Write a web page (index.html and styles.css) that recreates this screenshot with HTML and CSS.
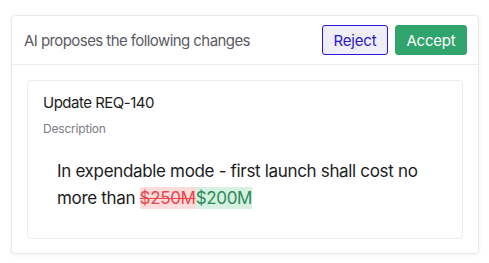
FILE: index.html
```html
<!DOCTYPE html>
<html>
<head>
<meta charset="utf-8">
<link rel="stylesheet" href="styles.css">
</head>
<body>
<div class="card">
  <div class="card-header">
    <span class="title">AI proposes the following changes</span>
    <div class="actions">
      <button class="btn btn-reject">Reject</button>
      <button class="btn btn-accept">Accept</button>
    </div>
  </div>
  <div class="card-body">
    <div class="change">
      <div class="change-title">Update REQ-140</div>
      <div class="change-label">Description</div>
      <p class="change-text">In expendable mode - first launch shall cost no more than <del class="removed">$250M</del><ins class="added">$200M</ins></p>
    </div>
  </div>
</div>
</body>
</html>
```
FILE: styles.css
```css
* { box-sizing: border-box; }
html, body { margin: 0; padding: 0; background: #ffffff; }
body {
  font-family: Inter, "Noto Sans", sans-serif;
  padding: 15px 10px 10px 11px;
}
.card {
  width: 468px;
  border: 1px solid #e9e9ec;
  border-radius: 4px;
  background: #fff;
  box-shadow: 0 1px 4px rgba(0,0,0,0.06);
}
.card-header {
  display: flex;
  align-items: center;
  justify-content: space-between;
  height: 49px;
  padding: 0 11px 0 12px;
  border-bottom: 1px solid #ececef;
}
.title {
  font-size: 15px;
  color: #5b5b63;
  letter-spacing: -0.57px;
}
.actions { display: flex; gap: 7px; }
.btn {
  font-family: inherit;
  font-size: 15px;
  height: 30px;
  border-radius: 3px;
  padding: 0;
  cursor: pointer;
  letter-spacing: -0.2px;
}
.btn-reject {
  width: 66px;
  background: #efeef6;
  color: #2a17c9;
  border: 1px solid #2a17d6;
}
.btn-accept {
  width: 72px;
  background: #2fa46c;
  color: #ffffff;
  border: 1px solid #2fa46c;
}
.card-body {
  padding: 15px 15px 14px 15px;
}
.change {
  border: 1px solid #ececef;
  border-radius: 4px;
  padding: 12px 15px 10px 15px;
  min-height: 159px;
}
.change-title {
  font-size: 15px;
  color: #1d1d20;
  line-height: 20px;
  letter-spacing: -0.5px;
}
.change-label {
  font-size: 12px;
  color: #7b7b84;
  margin-top: 8px;
  line-height: 16px;
  letter-spacing: -0.2px;
}
.change-text {
  margin: 21px 0 0 14px;
  font-size: 17px;
  line-height: 27px;
  color: #1b1b1e;
  letter-spacing: -0.33px;
}
.removed {
  background: #fddcdc;
  color: #e5484d;
  text-decoration: line-through;
  padding: 1px 0;
}
.added {
  background: #d7f1e0;
  color: #2b8a5c;
  text-decoration: none;
  padding: 1px 0;
}
```
